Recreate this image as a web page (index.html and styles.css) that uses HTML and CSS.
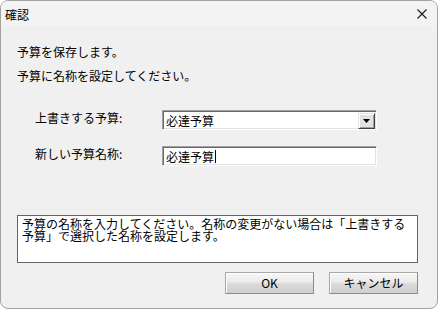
FILE: index.html
```html
<!DOCTYPE html>
<html lang="ja">
<head>
<meta charset="utf-8">
<title>確認</title>
<link rel="stylesheet" href="styles.css">
</head>
<body>
<div class="window">
  <div class="titlebar">
    <span class="title">確認</span>
    <svg class="close" width="10" height="10" viewBox="0 0 10 10"><path d="M0.5 0.5 L9.5 9.5 M9.5 0.5 L0.5 9.5" stroke="#1a1a1a" stroke-width="1.1" fill="none"/></svg>
  </div>
  <div class="content">
    <p class="line">予算を保存します。</p>
    <p class="line">予算に名称を設定してください。</p>
    <div class="form">
      <div class="row">
        <span class="label">上書きする予算:</span>
        <div class="field combo">
          <span class="value">必達予算</span>
          <span class="dropbtn"><svg width="7" height="4" viewBox="0 0 7 4"><path d="M0 0 H7 L3.5 4 Z" fill="#000"/></svg></span>
        </div>
      </div>
      <div class="row">
        <span class="label">新しい予算名称:</span>
        <div class="field">
          <span class="value">必達予算</span><span class="caret"></span>
        </div>
      </div>
    </div>
    <div class="message">
      <div class="msgline">予算の名称を入力してください。名称の変更がない場合は「上書きする</div>
      <div class="msgline">予算」で選択した名称を設定します。</div>
    </div>
    <div class="buttons">
      <button class="btn">OK</button>
      <button class="btn">キャンセル</button>
    </div>
  </div>
</div>
</body>
</html>
```

FILE: styles.css
```css
* { box-sizing: border-box; }
html, body { margin: 0; padding: 0; background: #ffffff; }
body {
  font-family: "Noto Sans CJK JP", "Noto Sans", sans-serif;
  font-size: 12px;
  color: #000;
}
.window {
  width: 438px;
  height: 309px;
  border: 1px solid #a3a3a3;
  border-radius: 8px;
  background: #f0f0f0;
  overflow: hidden;
  display: flex;
  flex-direction: column;
}
.titlebar {
  height: 25px;
  background: #f3f3f3;
  display: flex;
  align-items: center;
  justify-content: space-between;
  padding: 2px 10px 0 4px;
  flex: none;
}
.title { font-size: 12px; line-height: 14px; }
.close { display: block; margin-top: -1px; }
.content {
  flex: 1;
  padding: 14px 18px 0 16px;
  display: flex;
  flex-direction: column;
}
.line {
  margin: 0;
  line-height: 24px;
  height: 24px;
}
.form {
  margin-top: 22px;
  display: flex;
  flex-direction: column;
  gap: 16px;
}
.row {
  display: flex;
  align-items: center;
  height: 20px;
}
.label {
  width: 145px;
  padding-left: 18px;
  line-height: 14px;
  position: relative;
  top: -2px;
}
.field {
  width: 215px;
  height: 20px;
  background: #fff;
  border-top: 1px solid #a0a0a0;
  border-left: 1px solid #a0a0a0;
  border-right: 1px solid #ffffff;
  border-bottom: 1px solid #ffffff;
  box-shadow: inset 1px 1px 0 #696969, inset -1px -1px 0 #e3e3e3;
  display: flex;
  align-items: center;
  padding: 1px 2px 0 3px;
}
.value { line-height: 14px; }
.caret {
  display: inline-block;
  width: 1px;
  height: 13px;
  background: #000;
  margin-left: 1px;
}
.combo { justify-content: space-between; padding-right: 1px; }
.dropbtn {
  width: 17px;
  height: 16px;
  background: #e3e3e3;
  border-top: 1px solid #e3e3e3;
  border-left: 1px solid #e3e3e3;
  border-right: 1px solid #404040;
  border-bottom: 1px solid #404040;
  box-shadow: inset 1px 1px 0 #ffffff, inset -1px -1px 0 #a0a0a0;
  display: flex;
  align-items: center;
  justify-content: center;
  margin-top: 1px;
}
.dropbtn svg { display: block; }
.message {
  margin-top: 49px;
  width: 401px;
  height: 48px;
  background: #fff;
  border: 1px solid #646464;
  padding: 2px 4px 0 4px;
  font-size: 12px;
  white-space: nowrap;
}
.msgline {
  height: 12px;
  line-height: 12px;
}
.buttons {
  margin-top: 9px;
  width: 401px;
  display: flex;
  justify-content: flex-end;
  gap: 15px;
}
.btn {
  width: 89px;
  height: 22px;
  font-family: "Noto Sans CJK JP", "Noto Sans", sans-serif;
  font-size: 12px;
  color: #000;
  padding: 0;
  border: 1px solid #a8a8a8;
  border-right-color: #8c8c8c;
  border-bottom-color: #8c8c8c;
  background: linear-gradient(#f6f6f6, #ebebeb 45%, #dadada 55%, #cfcfcf);
  box-shadow: inset 1px 1px 0 #ffffff;
  line-height: 14px;
}
```
